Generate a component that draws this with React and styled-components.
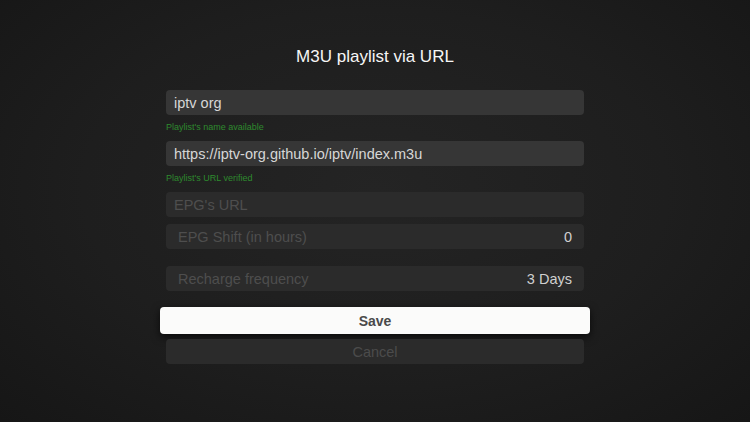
import React from "react";
import styled, { createGlobalStyle } from "styled-components";

const Global = createGlobalStyle`
  html, body { margin: 0; padding: 0; }
  body {
    width: 750px;
    height: 422px;
    overflow: hidden;
    font-family: "Liberation Sans", Arial, sans-serif;
    background: #1b1b1b;
  }
`;

const Screen = styled.div`
  width: 750px;
  height: 422px;
  box-sizing: border-box;
  background: radial-gradient(ellipse at 50% 45%, #242424 0%, #1e1e1e 55%, #161616 100%);
  display: flex;
  flex-direction: column;
  align-items: center;
  padding-top: 46px;
`;

const Title = styled.h1`
  margin: 0;
  font-size: 17px;
  font-weight: 400;
  color: #f6f6f6;
  line-height: 22px;
  height: 22px;
`;

const Form = styled.div`
  width: 418px;
  display: flex;
  flex-direction: column;
  margin-top: 22px;
`;

const Field = styled.div`
  height: 25px;
  border-radius: 4px;
  background: ${(p) => (p.$filled ? "#363636" : "#2b2b2b")};
  display: flex;
  align-items: center;
  justify-content: space-between;
  padding: 0 ${(p) => (p.$inset ? "12px" : "8px")} 0 ${(p) => (p.$inset ? "12px" : "8px")};
  box-sizing: border-box;
  font-size: 14.5px;
  margin-top: ${(p) => p.$mt || 0}px;
`;

const Value = styled.span`
  color: ${(p) => (p.$muted ? "#4e4e4e" : "#d6d6d6")};
`;

const Right = styled.span`
  color: #d0d0d0;
`;

const Hint = styled.div`
  color: #2e8a2e;
  font-size: 9px;
  line-height: 10px;
  height: 10px;
  margin-top: 7px;
  margin-bottom: 9px;
`;

const SaveButton = styled.button`
  margin: 16px -6px 0;
  height: 27px;
  border: none;
  border-radius: 4px;
  background: #fbfbfa;
  color: #4a4a4a;
  font-family: "Liberation Sans", Arial, sans-serif;
  font-size: 14px;
  font-weight: 700;
  box-shadow: 0 3px 8px rgba(0, 0, 0, 0.7);
  padding: 0;
`;

const CancelButton = styled.button`
  margin-top: 5px;
  height: 25px;
  border: none;
  border-radius: 4px;
  background: #2b2b2b;
  color: #4b4b4b;
  font-family: "Liberation Sans", Arial, sans-serif;
  font-size: 14.5px;
  padding: 0;
`;

export default function App() {
  return (
    <>
      <Global />
      <Screen>
        <Title>M3U playlist via URL</Title>
        <Form>
          <Field $filled>
            <Value>iptv org</Value>
          </Field>
          <Hint>Playlist's name available</Hint>
          <Field $filled>
            <Value>https://iptv-org.github.io/iptv/index.m3u</Value>
          </Field>
          <Hint>Playlist's URL verified</Hint>
          <Field>
            <Value $muted>EPG's URL</Value>
          </Field>
          <Field $inset $mt={7}>
            <Value $muted>EPG Shift (in hours)</Value>
            <Right>0</Right>
          </Field>
          <Field $inset $mt={17}>
            <Value $muted>Recharge frequency</Value>
            <Right>3 Days</Right>
          </Field>
          <SaveButton>Save</SaveButton>
          <CancelButton>Cancel</CancelButton>
        </Form>
      </Screen>
    </>
  );
}
